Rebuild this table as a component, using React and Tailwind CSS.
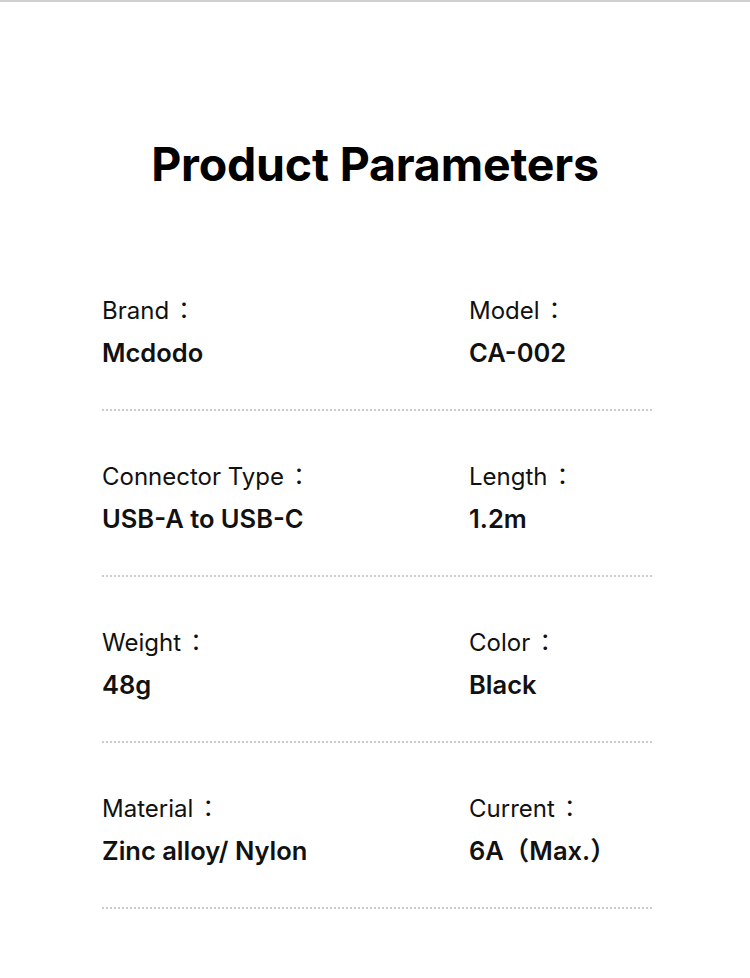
import React from 'react';

const params = [
  [['Brand', 'Mcdodo'], ['Model', 'CA-002']],
  [['Connector Type', 'USB-A to USB-C'], ['Length', '1.2m']],
  [['Weight', '48g'], ['Color', 'Black']],
  [['Material', 'Zinc alloy/ Nylon'], ['Current', '6A（Max.）']],
];

function Cell({ label, value }) {
  return (
    <div>
      <div className="text-[24px] leading-[28px] text-[#111]">
        {label}
        <span className="ml-[3px]" style={{ fontFamily: '"Noto Sans CJK JP", sans-serif' }}>：</span>
      </div>
      <div className="mt-[14px] text-[25.5px] leading-[28px] font-semibold text-[#111]">{value}</div>
    </div>
  );
}

export default function App() {
  return (
    <div
      className="w-[750px] h-[978px] bg-white border-t-2 border-[#cfcfcf]"
      style={{ fontFamily: 'Inter, "Noto Sans CJK JP", sans-serif' }}
    >
      <h1 className="pt-[134px] text-center text-[46.5px] leading-[56px] font-bold text-black tracking-[-0.2px]">
        Product Parameters
      </h1>
      <div className="mt-[103px] px-[102px]">
        {params.map((row, i) => (
          <div key={i} className={i === 0 ? '' : 'mt-[50px]'}>
            <div className="grid grid-cols-[367px_1fr]">
              {row.map(([l, v]) => (
                <Cell key={l} label={l} value={v} />
              ))}
            </div>
            <div className="mt-[42px] h-[2px] w-[552px] bg-[linear-gradient(to_right,#cccccc_2px,transparent_2px)] bg-[length:4px_2px]" />
          </div>
        ))}
      </div>
    </div>
  );
}
